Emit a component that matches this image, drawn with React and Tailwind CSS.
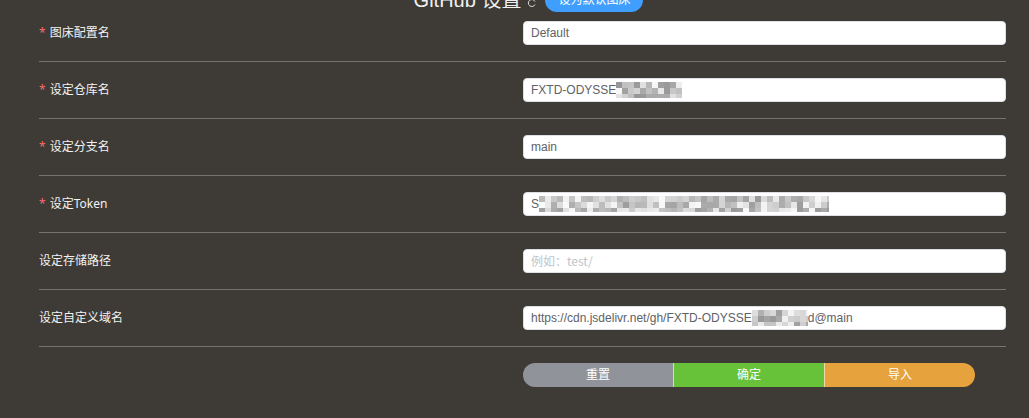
import { useMemo } from "react";

const rows = [
  { label: "图床配置名", required: true, value: "Default" },
  { label: "设定仓库名", required: true, value: "FXTD-ODYSSE", mosaic: 66 },
  { label: "设定分支名", required: true, value: "main" },
  { label: "设定Token", required: true, value: "S", mosaic: 290 },
  { label: "设定存储路径", placeholder: "例如：test/" },
  { label: "设定自定义域名", value: "https://cdn.jsdelivr.net/gh/FXTD-ODYSSE", mosaic: 56, tail: "d@main" },
];

function Mosaic({ width, seed, height = 16 }) {
  const cells = useMemo(() => {
    const out = [];
    let s = seed;
    const rand = () => {
      s = (s * 9301 + 49297) % 233280;
      return s / 233280;
    };
    for (let y = 0; y < height; y += 6) {
      for (let x = 0; x < width; x += 6) {
        const g = Math.round(150 + rand() * 100);
        out.push({ x, y, c: `rgb(${g},${g},${g})` });
      }
    }
    return out;
  }, [width, seed, height]);
  return (
    <svg width={width} height={height} className="shrink-0">
      {cells.map((cell, i) => (
        <rect key={i} x={cell.x} y={cell.y} width="6" height="6" fill={cell.c} />
      ))}
    </svg>
  );
}

export default function App() {
  return (
    <div className="min-h-[418px] w-full overflow-hidden bg-[#3e3a35] pl-[39px] pr-[23px] font-['Noto_Sans','Noto_Sans_CJK_SC',sans-serif]">
      <div className="mt-[-12px] flex h-[24px] items-center justify-center gap-[6px] pl-[12px]">
        <span className="font-['Liberation_Sans','Noto_Sans_CJK_SC',sans-serif] text-[20px] leading-none text-[#f0f0f0]">GitHub 设置</span>
        <svg width="10" height="10" viewBox="0 0 10 10" className="mt-[6px]">
          <path d="M8 3.5A3.5 3.5 0 1 0 8 6.5" fill="none" stroke="#ddd" strokeWidth="1" />
        </svg>
        <span className="ml-[2px] rounded-full bg-[#409eff] px-[13px] py-[5px] text-[12px] leading-[14px] text-white">设为默认图床</span>
      </div>
      <div className="mt-[-7px]">
        {rows.map((row, i) => (
          <div key={i} className="flex items-center border-b border-[#77736e] py-[16px]">
            <div className="w-[484px] text-[12px] text-[#f2f2f2]">
              {row.required && <span className="mr-[4px] text-[#f56c6c]">*</span>}
              {row.label}
            </div>
            <div className="flex h-[24px] flex-1 items-center overflow-hidden rounded-[4px] border border-[#dcdfe6] bg-white px-[7px] font-['Liberation_Sans',sans-serif] text-[12px] text-[#606266]">
              {row.placeholder ? (
                <span className="font-['Noto_Sans_CJK_SC','Liberation_Sans',sans-serif] text-[#c0c4cc]">{row.placeholder}</span>
              ) : (
                <>
                  <span>{row.value}</span>
                  {row.mosaic && <Mosaic width={row.mosaic} seed={i * 17 + 3} />}
                  {row.tail && <span>{row.tail}</span>}
                </>
              )}
            </div>
          </div>
        ))}
      </div>
      <div className="flex pl-[484px] pt-[16px]">
        <div className="flex h-[24px] w-[452px] overflow-hidden rounded-full text-[12px] text-white">
          <div className="flex flex-1 items-center justify-center bg-[#909399]">重置</div>
          <div className="flex flex-1 items-center justify-center border-l border-[#c8e6b0] bg-[#67c23a]">确定</div>
          <div className="flex flex-1 items-center justify-center border-l border-[#f0d8a8] bg-[#e6a23c]">导入</div>
        </div>
      </div>
    </div>
  );
}
